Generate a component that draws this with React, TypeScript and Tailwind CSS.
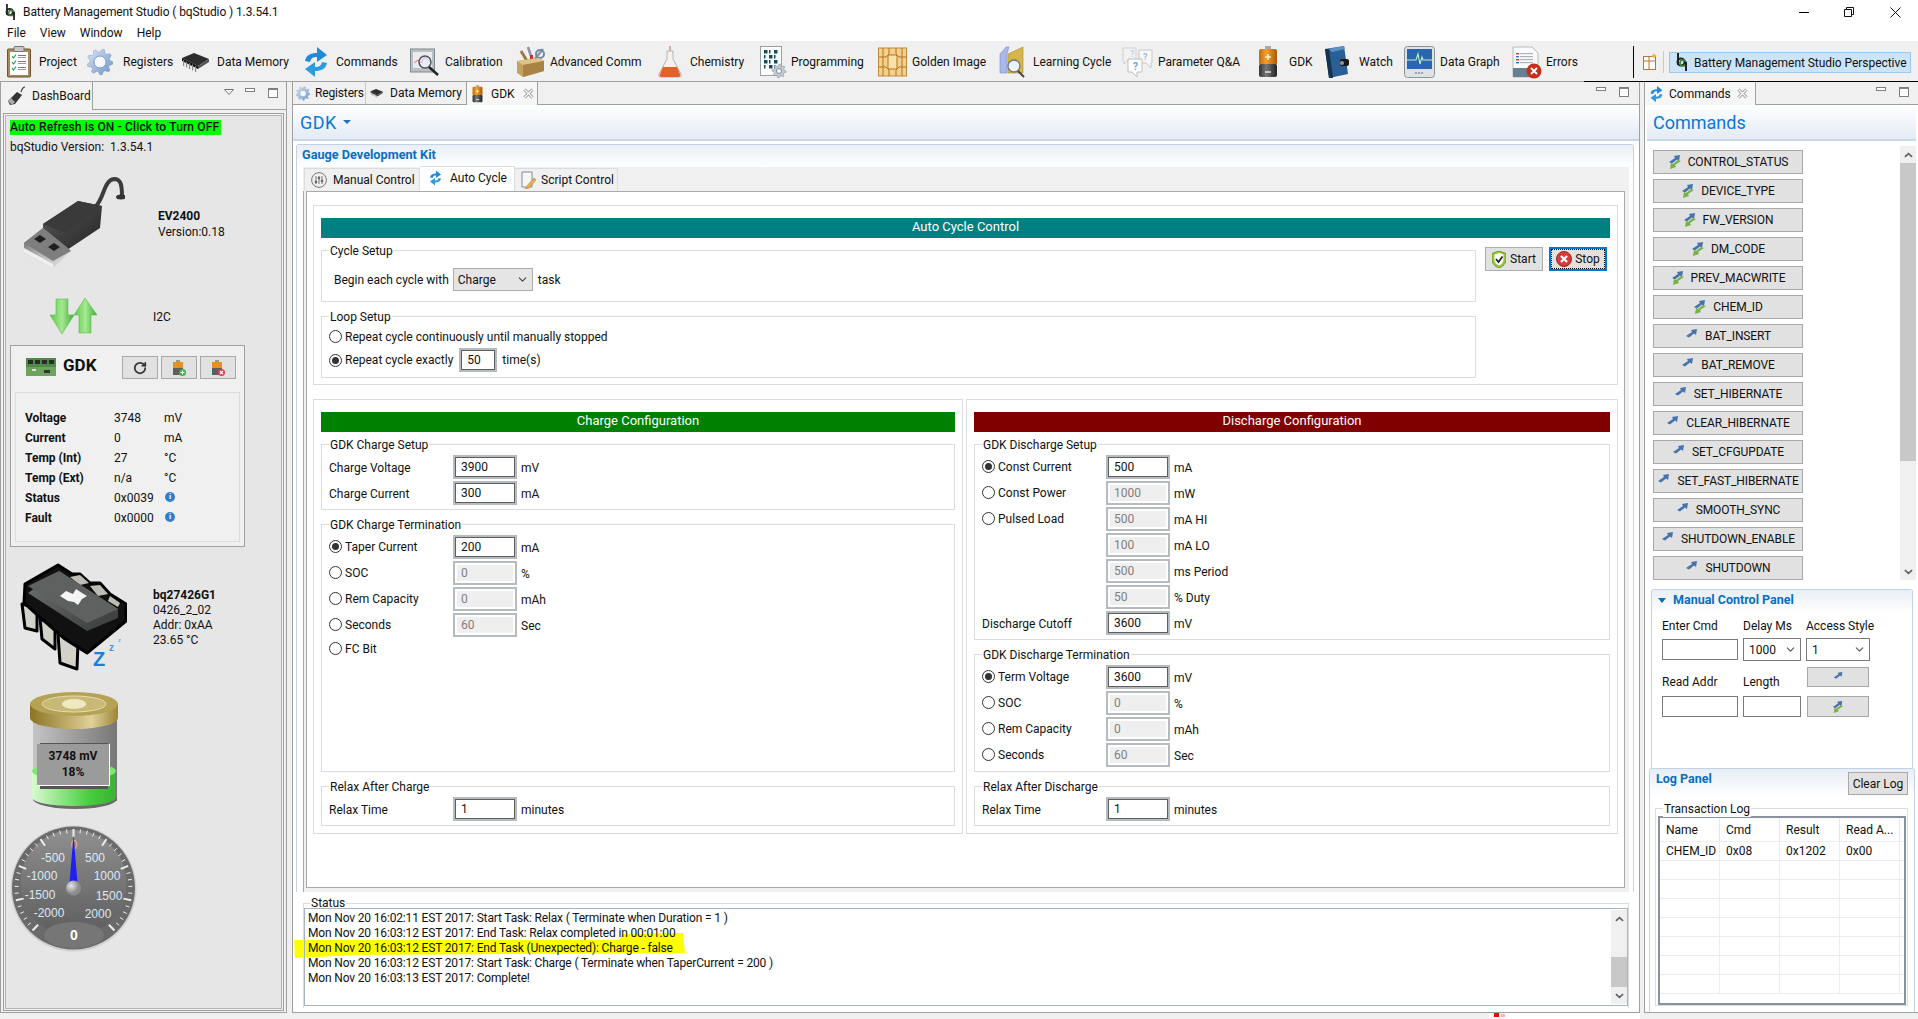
import React from 'react';
import { RotateCw, ChevronDown } from 'lucide-react';

type IconProps = { className?: string };

function gearPoints(cx: number, cy: number, ro: number, ri: number, n: number) {
  const pts: string[] = [];
  for (let i = 0; i < n * 4; i++) {
    const a = (i / (n * 4)) * Math.PI * 2;
    const r = i % 4 < 2 ? ro : ri;
    pts.push(`${(cx + r * Math.cos(a)).toFixed(2)},${(cy + r * Math.sin(a)).toFixed(2)}`);
  }
  return pts.join(' ');
}

function ProjectIcon({ className }: IconProps) {
  return (
    <svg viewBox="0 0 24 32" className={className}>
      <rect x="0.5" y="3" width="23" height="28" rx="1" fill="#a98a5f" stroke="#6f5432" />
      <rect x="3" y="6" width="18" height="23" fill="#fff" />
      <rect x="7" y="0.5" width="10" height="5" rx="1" fill="#c9c9c9" stroke="#777" />
      {[10, 16, 22].map((y) => (
        <g key={y}>
          <path d={`M5 ${y}l1.5 2 2.5-3.5`} stroke="#2f9a5a" strokeWidth="1.2" fill="none" />
          <rect x="11" y={y - 1} width="8" height="1" fill="#777" />
          <rect x="11" y={y + 1} width="8" height="1" fill="#999" />
        </g>
      ))}
    </svg>
  );
}

function GearIcon({ className }: IconProps) {
  return (
    <svg viewBox="0 0 26 30" className={className}>
      <defs>
        <linearGradient id="gearFill" x1="0" y1="0" x2="1" y2="1">
          <stop offset="0" stopColor="#dbe6f5" />
          <stop offset="1" stopColor="#6d92c6" />
        </linearGradient>
      </defs>
      <polygon points={gearPoints(13, 15, 13, 10, 9)} fill="url(#gearFill)" stroke="#7f9cc6" strokeWidth="0.5" />
      <circle cx="13" cy="15" r="6" fill="#f5f7fb" stroke="#7f9cc6" />
    </svg>
  );
}

function ChipIcon({ className }: IconProps) {
  return (
    <svg viewBox="0 0 30 22" className={className}>
      <polygon points="2,7 14,2 29,8 18,15" fill="#2d2d2d" />
      <polygon points="2,7 18,15 18,18 2,10" fill="#111" />
      <polygon points="18,15 29,8 29,11 18,18" fill="#555" />
      {[3, 6, 9, 12, 15].map((x) => (
        <rect key={x} x={x} y={9 + (x - 3) / 2} width="1.2" height="6" fill="#8a8a8a" />
      ))}
    </svg>
  );
}

function SyncIcon({ className }: IconProps) {
  return (
    <svg viewBox="0 0 24 32" className={className}>
      <path d="M1 15C2 9 7 7 13 7V1l10 8-10 7v-5c-4 0-6 1-7 5z" fill="#1f8ad8" />
      <path d="M23 17c-1 6-6 8-12 8v6L1 23l10-7v5c4 0 6-1 7-5z" fill="#2c9be4" />
    </svg>
  );
}

function CalibrationIcon({ className }: IconProps) {
  return (
    <svg viewBox="0 0 30 30" className={className}>
      <rect x="0.5" y="2" width="24" height="23" fill="#b9c0c6" stroke="#80888e" />
      <rect x="3" y="5" width="19" height="16" fill="#e9edf0" />
      <path d="M4 16l4-3 3 3 4-6 5 5" stroke="#d46" fill="none" strokeWidth="0.8" />
      <circle cx="15" cy="15" r="6" fill="#dff0fa" fillOpacity="0.6" stroke="#555" strokeWidth="1.5" />
      <path d="M19 20l9 8" stroke="#222" strokeWidth="2.5" />
    </svg>
  );
}

function ToolboxIcon({ className }: IconProps) {
  return (
    <svg viewBox="0 0 30 32" className={className}>
      <path d="M13 1l4 12M28 3l-9 11" stroke="#8c96a8" strokeWidth="2.5" />
      <path d="M6 5l6 10" stroke="#9b7a3f" strokeWidth="3" />
      <circle cx="25" cy="8" r="4" fill="none" stroke="#7186aa" strokeWidth="2" />
      <rect x="15" y="9" width="3" height="6" fill="#cc2f2f" />
      <polygon points="2,15 24,12 29,15 29,25 8,31 2,27" fill="#c4a15f" />
      <polygon points="2,15 24,12 29,15 8,19" fill="#dcc388" />
      <polygon points="8,19 29,15 29,25 8,31" fill="#a98343" />
    </svg>
  );
}

function FlaskIcon({ className }: IconProps) {
  return (
    <svg viewBox="0 0 28 32" className={className}>
      <path d="M14 0v8" stroke="#c89a8a" strokeWidth="1.5" />
      <path d="M11 5h6v8l8 15c1 2 0 3-2 3H5c-2 0-3-1-2-3l8-15z" fill="#f4f1ee" stroke="#b8b3ad" />
      <path d="M7 21h14l3 7c1 2 0 3-2 3H6c-2 0-3-1-2-3z" fill="#e2622a" />
    </svg>
  );
}

function ProgrammingIcon({ className }: IconProps) {
  const cells = [0, 1, 2, 3, 4, 5, 6, 7, 8, 9, 10, 11];
  return (
    <svg viewBox="0 0 27 32" className={className}>
      <rect x="0.5" y="0.5" width="21" height="29" fill="#fff" stroke="#9aa0a6" />
      {cells.map((i) => (
        <rect key={i} x={4 + (i % 3) * 5} y={4 + Math.floor(i / 3) * 5} width={i % 2 ? 1.5 : 3.5} height="3.5" fill="#124f5c" />
      ))}
      <polygon points={gearPoints(19, 25, 7, 5, 8)} fill="#c3ccd6" stroke="#7d8894" strokeWidth="0.5" />
      <circle cx="19" cy="25" r="2.5" fill="#fff" stroke="#7d8894" />
    </svg>
  );
}

function GoldenIcon({ className }: IconProps) {
  return (
    <svg viewBox="0 0 29 30" className={className}>
      <rect x="0.5" y="1" width="28" height="28" fill="#f3d08c" stroke="#c08a3a" />
      <path d="M1 10h7l3-3V1M18 1v6l3 3h7M1 20h7l3 3v6M18 29v-6l3-3h7M5 1v28M24 1v28" stroke="#b5701f" fill="none" />
      <rect x="10" y="8" width="9" height="14" rx="1.5" fill="#f6e2ab" stroke="#b5701f" />
    </svg>
  );
}

function LearningIcon({ className }: IconProps) {
  return (
    <svg viewBox="0 0 27 32" className={className}>
      <polygon points="1,8 7,1 10,1 8,8 8,27 1,27" fill="#a9b7ea" stroke="#7c8bc9" strokeWidth="0.6" />
      <polygon points="9,8 24,1 24,27 9,27" fill="#d4b64a" stroke="#a88d2a" strokeWidth="0.6" />
      <circle cx="15" cy="20" r="6" fill="#eaf4f7" stroke="#6b7a80" strokeWidth="1.3" />
      <path d="M19 25l6 6" stroke="#444" strokeWidth="2" />
    </svg>
  );
}

function QaIcon({ className }: IconProps) {
  return (
    <svg viewBox="0 0 31 32" className={className}>
      <path d="M1 2h13v13H5l-3 3V15H1z" fill="#f2f2f2" stroke="#d0d0d0" />
      <path d="M17 4h13v13h-1v5l-5-5h-7z" fill="#f7f7f7" stroke="#c8c8c8" />
      <path d="M6 13h14v13h-5v5l-5-5H6z" fill="#fff" stroke="#bdbdbd" />
      <text x="8" y="11" fontSize="9" fill="#c6d6ea" fontWeight="700">?</text>
      <text x="21" y="14" fontSize="9" fill="#9fbbdd" fontWeight="700">?</text>
      <text x="11" y="24" fontSize="10" fill="#6f9bd0" fontWeight="700">?</text>
    </svg>
  );
}

function BatteryIcon({ className }: IconProps) {
  return (
    <svg viewBox="0 0 20 32" className={className}>
      <defs>
        <linearGradient id="batSide" x1="0" x2="1">
          <stop offset="0" stopColor="#c06a10" />
          <stop offset="0.4" stopColor="#f5a02a" />
          <stop offset="1" stopColor="#a85a08" />
        </linearGradient>
        <linearGradient id="batDark" x1="0" x2="1">
          <stop offset="0" stopColor="#333" />
          <stop offset="0.4" stopColor="#777" />
          <stop offset="1" stopColor="#222" />
        </linearGradient>
      </defs>
      <rect x="7" y="0" width="6" height="4" fill="#aaa" />
      <rect x="1" y="3" width="18" height="16" rx="2" fill="url(#batSide)" />
      <rect x="1" y="18" width="18" height="13" rx="2" fill="url(#batDark)" />
      <path d="M10 8v6M7 11h6" stroke="#fff2c8" strokeWidth="1.6" />
      <path d="M7 26h6" stroke="#ddd" strokeWidth="1.6" />
    </svg>
  );
}

function WatchIcon({ className }: IconProps) {
  return (
    <svg viewBox="0 0 26 32" className={className}>
      <polygon points="1,3 20,0 24,28 5,32" fill="#275f96" />
      <polygon points="1,3 5,3 9,32 5,32" fill="#16324f" />
      <polygon points="5,3 20,0 21,3 8,6" fill="#5d93c4" />
      <rect x="16" y="13" width="9" height="7" rx="2" fill="#1a1a1a" />
      <circle cx="18" cy="17" r="2" fill="#999" />
    </svg>
  );
}

function GraphIcon({ className }: IconProps) {
  return (
    <svg viewBox="0 0 31 32" className={className}>
      <rect x="0.5" y="0.5" width="30" height="31" rx="3" fill="#dfe2e4" stroke="#8c9296" />
      <rect x="3" y="3" width="25" height="20" fill="#2a66b0" />
      <path d="M3 14h9l2-6 2 10 2-7 1 3h9" stroke="#c6f1c0" fill="none" strokeWidth="1.1" />
      {[12, 15, 18].map((x) => (
        <circle key={x} cx={x} cy="27" r="1.1" fill="#8d9398" />
      ))}
    </svg>
  );
}

function ErrorsIcon({ className }: IconProps) {
  return (
    <svg viewBox="0 0 30 33" className={className}>
      <path d="M1 1h19l6 6v24H1z" fill="#fafafa" stroke="#b7bcc1" />
      <rect x="1" y="22" width="25" height="9" fill="#6a7f94" />
      {[7, 10, 13, 16].map((y) => (
        <g key={y}>
          <rect x="4" y={y} width="3" height="1.4" fill={y % 2 ? '#c33' : '#37c'} />
          <rect x="8" y={y} width="13" height="1.2" fill="#aab2bb" />
        </g>
      ))}
      <circle cx="22" cy="25" r="7.5" fill="#c4301c" />
      <path d="M19 22l6 6M25 22l-6 6" stroke="#fff" strokeWidth="1.8" />
    </svg>
  );
}

function BqLogo({ className }: IconProps) {
  return (
    <svg viewBox="0 0 12 18" className={className}>
      <rect x="1" y="0" width="2" height="12" fill="#222" />
      <circle cx="5" cy="9" r="3.5" fill="none" stroke="#222" strokeWidth="2" />
      <circle cx="7" cy="10" r="3" fill="none" stroke="#3f7f3f" strokeWidth="1.6" />
      <rect x="9" y="9" width="2" height="9" fill="#222" />
    </svg>
  );
}

function CloseX() {
  return (
    <svg viewBox="0 0 11 11" className="w-[11px] h-[11px] shrink-0">
      <path d="M1.5 1.5l8 8M9.5 1.5l-8 8" stroke="#8b8b8b" strokeWidth="3" />
      <path d="M1.5 1.5l8 8M9.5 1.5l-8 8" stroke="#fff" strokeWidth="1.4" />
    </svg>
  );
}

function PaneControls({ spread = 'gap-[13px]' }: { spread?: string }) {
  return (
    <div className={`flex items-start ${spread}`}>
      <div className="w-[10px] h-[4px] border border-[#7f7f7f] bg-white mt-[5px]" />
      <div className="w-[10px] h-[10px] border border-[#7f7f7f] border-t-2 bg-white mt-[5px]" />
    </div>
  );
}

const toolbarItems = [
  { label: 'Project', Icon: ProjectIcon, icon: 'w-[24px] h-[32px]', gap: 'ml-[8px]', width: 'w-[80px]' },
  { label: 'Registers', Icon: GearIcon, icon: 'w-[26px] h-[30px]', gap: 'ml-[10px]', width: 'w-[93px]' },
  { label: 'Data Memory', Icon: ChipIcon, icon: 'w-[30px] h-[22px]', gap: 'ml-[7px]', width: 'w-[124px]' },
  { label: 'Commands', Icon: SyncIcon, icon: 'w-[24px] h-[32px]', gap: 'ml-[8px]', width: 'w-[106px]' },
  { label: 'Calibration', Icon: CalibrationIcon, icon: 'w-[30px] h-[30px]', gap: 'ml-[5px]', width: 'w-[105px]' },
  { label: 'Advanced Comm', Icon: ToolboxIcon, icon: 'w-[30px] h-[32px]', gap: 'ml-[5px]', width: 'w-[141px]' },
  { label: 'Chemistry', Icon: FlaskIcon, icon: 'w-[28px] h-[32px]', gap: 'ml-[6px]', width: 'w-[104px]' },
  { label: 'Programming', Icon: ProgrammingIcon, icon: 'w-[27px] h-[32px]', gap: 'ml-[4px]', width: 'w-[118px]' },
  { label: 'Golden Image', Icon: GoldenIcon, icon: 'w-[29px] h-[30px]', gap: 'ml-[5px]', width: 'w-[121px]' },
  { label: 'Learning Cycle', Icon: LearningIcon, icon: 'w-[27px] h-[32px]', gap: 'ml-[7px]', width: 'w-[123px]' },
  { label: 'Parameter Q&A', Icon: QaIcon, icon: 'w-[31px] h-[32px]', gap: 'ml-[5px]', width: 'w-[136px]' },
  { label: 'GDK', Icon: BatteryIcon, icon: 'w-[20px] h-[32px]', gap: 'ml-[11px]', width: 'w-[66px]' },
  { label: 'Watch', Icon: WatchIcon, icon: 'w-[26px] h-[32px]', gap: 'ml-[9px]', width: 'w-[80px]' },
  { label: 'Data Graph', Icon: GraphIcon, icon: 'w-[31px] h-[32px]', gap: 'ml-[5px]', width: 'w-[108px]' },
  { label: 'Errors', Icon: ErrorsIcon, icon: 'w-[30px] h-[33px]', gap: 'ml-[4px]', width: 'w-[70px]' },
];

function Toolbar() {
  return (
    <div className="h-[40px] flex items-center pl-[7px] pt-[2px] shrink-0">
      {toolbarItems.map(({ label, Icon, icon, gap, width }) => (
        <div key={label} className={`flex items-center shrink-0 ${width}`}>
          <Icon className={`${icon} shrink-0`} />
          <span className={`${gap} whitespace-nowrap`}>{label}</span>
        </div>
      ))}
      <div className="w-px h-[32px] bg-black ml-[51px]" />
      <svg viewBox="0 0 14 18" className="w-[14px] h-[18px] ml-[9px]">
        <rect x="0.5" y="3.5" width="12" height="13" fill="#fff" stroke="#b07a3a" />
        <path d="M0.5 8h12M6 3.5v13" stroke="#b07a3a" />
        <path d="M11 0l1 2 2 1-2 1-1 2-1-2-2-1 2-1z" fill="#e5b83a" />
      </svg>
      <div className="w-px h-[22px] bg-[#c8c8c8] ml-[6px]" />
      <div className="ml-[5px] w-[242px] h-[21px] bg-[#cce4f7] border border-[#99c9ef] flex items-center pl-[6px] gap-[6px]">
        <BqLogo className="w-[12px] h-[18px]" />
        <span className="whitespace-nowrap mt-[2px] tracking-[-0.05px]">Battery Management Studio Perspective</span>
      </div>
    </div>
  );
}

function UsbIcon() {
  return (
    <svg viewBox="0 0 101 93" className="w-[101px] h-[93px]">
      <defs>
        <linearGradient id="usbMetal" x1="0" y1="0" x2="1" y2="1">
          <stop offset="0" stopColor="#5f5f5f" />
          <stop offset="0.5" stopColor="#b4b4b4" />
          <stop offset="1" stopColor="#e8e8e8" />
        </linearGradient>
        <linearGradient id="usbBody" x1="0" y1="0" x2="1" y2="1">
          <stop offset="0" stopColor="#5a5a5a" />
          <stop offset="1" stopColor="#222" />
        </linearGradient>
      </defs>
      <path d="M72 30C80 22 80 4 90 3c7 0 8 6 8 18" stroke="#3c3c3c" strokeWidth="4" fill="none" />
      <ellipse cx="97" cy="21" rx="5" ry="2.500" fill="#333" />
      <polygon points="19,48 54,25 78,30 76,52 37,78 19,55" fill="url(#usbBody)" />
      <polygon points="19,48 54,25 78,30 42,57" fill="#3a3a3a" />
      <polygon points="0,67 19,52 47,75 29,92 0,77" fill="url(#usbMetal)" />
      <polygon points="0,67 19,52 47,75 29,85" fill="#7e7e7e" />
      <polygon points="0,72 29,88 29,92 0,77" fill="#efefef" />
      <polygon points="10,63 16,59 22,63 16,67" fill="#1f1f1f" />
      <polygon points="24,71 30,67 36,71 30,75" fill="#1f1f1f" />
    </svg>
  );
}

function ArrowsIcon() {
  return (
    <svg viewBox="0 0 47 37" className="w-[47px] h-[37px]">
      <defs>
        <linearGradient id="arrowGreen" x1="0" x2="1">
          <stop offset="0" stopColor="#5cc94a" />
          <stop offset="0.5" stopColor="#a5e890" />
          <stop offset="1" stopColor="#3fae3a" />
        </linearGradient>
      </defs>
      <polygon points="6,1 18,1 18,17 24,17 12,36 0,17 6,17" fill="url(#arrowGreen)" stroke="#4eb045" strokeWidth="0.5" />
      <polygon points="29,35 41,35 41,17 47,17 35,0 24,17 29,17" fill="url(#arrowGreen)" stroke="#4eb045" strokeWidth="0.5" />
    </svg>
  );
}

function PcbIcon() {
  return (
    <svg viewBox="0 0 30 18" className="w-[30px] h-[18px] shrink-0">
      <rect width="30" height="18" fill="#4f8a4a" />
      <rect y="9" width="30" height="9" fill="#6ea35c" />
      {[2, 9, 16, 23].map((x) => (
        <rect key={x} x={x} y="2" width="5" height="4" fill="#2a2a2a" />
      ))}
      <rect x="6" y="11" width="4" height="2" fill="#ddd" />
      <rect x="18" y="12" width="6" height="3" fill="#333" />
    </svg>
  );
}

function SmallBattery({ add }: { add: boolean }) {
  return (
    <svg viewBox="0 0 14 16" className="w-[14px] h-[16px]">
      <rect x="4" y="0" width="4" height="2" fill="#999" />
      <rect x="1" y="2" width="10" height="6" fill="#e8921e" />
      <rect x="1" y="8" width="10" height="7" fill="#5e5e5e" />
      <circle cx="10.5" cy="12.5" r="3.5" fill={add ? '#3ab53a' : '#d8404a'} />
      {add ? (
        <path d="M8.5 12.5h4M10.5 10.5v4" stroke="#fff" strokeWidth="1.2" />
      ) : (
        <path d="M9 11l3 3M12 11l-3 3" stroke="#fff" strokeWidth="1.2" />
      )}
    </svg>
  );
}

function InfoDot() {
  return (
    <span className="w-[10px] h-[10px] mt-[-2px] ml-[1px] rounded-full bg-[#2f7fcf] text-white text-[8px] leading-[10px] text-center font-bold">i</span>
  );
}

function IcChip() {
  return (
    <svg viewBox="0 0 107 108" className="w-[107px] h-[108px]">
      <defs>
        <linearGradient id="icTop" x1="0" y1="0" x2="1" y2="0.6">
          <stop offset="0" stopColor="#6e7070" />
          <stop offset="1" stopColor="#404242" />
        </linearGradient>
      </defs>
      <g stroke="#000" strokeWidth="3" strokeLinejoin="round">
        <polygon points="2,41 17,45 17,68 5,65" fill="#d2d2ca" />
        <polygon points="20,55 35,65 35,86 22,76" fill="#d2d2ca" />
        <polygon points="38,71 58,80 57,106 40,100" fill="#d2d2ca" />
        <polygon points="5,21 38,2 52,11 60,11 70,20 80,20 90,31 106,41 106,58 67,90 45,76 22,56 4,40" fill="#111" />
      </g>
      <polygon points="50,14 60,12 69,20 60,22" fill="#bdbdb5" />
      <polygon points="70,23 80,22 88,31 78,33" fill="#bdbdb5" />
      <polygon points="90,33 100,40 98,44 88,38" fill="#bdbdb5" />
      <polygon points="8,30 39,8 98,46 98,55 67,68" fill="url(#icTop)" />
      <polygon points="8,23 39,8 98,46 67,60" fill="#5f6161" />
      <polygon points="40,33 46,28 53,31 56,26 62,30 67,33 62,36 58,42 54,39 48,38" fill="#f4f4f4" />
      <text x="73" y="103" fontSize="20" fontWeight="700" fill="#1a7fd6" fontFamily="Liberation Sans, sans-serif">Z</text>
      <text x="89" y="88" fontSize="10" fontWeight="700" fill="#3c97e0" fontFamily="Liberation Sans, sans-serif">z</text>
      <text x="98" y="79" fontSize="6" fontWeight="700" fill="#6cb0e8" fontFamily="Liberation Sans, sans-serif">z</text>
    </svg>
  );
}

function BatteryGauge() {
  return (
    <div className="relative w-[89px] h-[120px]">
      <svg viewBox="0 0 89 120" className="w-[89px] h-[120px]">
        <defs>
          <linearGradient id="cellBody" x1="0" x2="1">
            <stop offset="0" stopColor="#c4c4c4" />
            <stop offset="1" stopColor="#777" />
          </linearGradient>
          <linearGradient id="cellGreen" x1="0" x2="1">
            <stop offset="0" stopColor="#d8fbd0" />
            <stop offset="0.7" stopColor="#45cc3c" />
            <stop offset="1" stopColor="#3db035" />
          </linearGradient>
          <linearGradient id="cellCap" x1="0" x2="1">
            <stop offset="0" stopColor="#8c7423" />
            <stop offset="0.7" stopColor="#e0d19a" />
            <stop offset="1" stopColor="#9c8436" />
          </linearGradient>
        </defs>
        <rect x="3" y="20" width="84" height="90" fill="url(#cellBody)" />
        <ellipse cx="45" cy="108" rx="42" ry="10" fill="#6a6a6a" />
        <path d="M2 80c0 10 84 10 84 0v26c0 12-84 12-84 0z" fill="url(#cellGreen)" />
        <ellipse cx="44" cy="80" rx="42" ry="9" fill="#7ce872" />
        <rect x="0" y="13" width="88" height="14" fill="url(#cellCap)" />
        <ellipse cx="44" cy="27" rx="44" ry="11" fill="url(#cellCap)" />
        <ellipse cx="44" cy="13" rx="44" ry="12" fill="#b5a255" />
        <ellipse cx="44" cy="13" rx="32" ry="8" fill="#c9b976" stroke="#e6dcae" />
        <ellipse cx="44" cy="13" rx="12" ry="5" fill="#f0e8c0" />
        <rect x="10" y="52" width="68" height="46" fill="#555" />
      </svg>
      <div className="absolute left-[7px] top-[53px] w-[73px] h-[42px] bg-[#9b9b9b] border-r border-b border-white text-center font-bold text-[12px] leading-[16px] pt-[4px]">
        <div>3748 mV</div>
        <div>18%</div>
      </div>
    </div>
  );
}

function DialGauge() {
  const ticks = Array.from({ length: 41 }, (_, i) => -136 + i * 6.8);
  const labels: [string, number, number][] = [
    ['-500', 43, 33],
    ['500', 85, 33],
    ['-1000', 32, 51],
    ['1000', 97, 51],
    ['-1500', 30, 70],
    ['1500', 99, 71],
    ['-2000', 39, 88],
    ['2000', 88, 89],
  ];
  return (
    <svg viewBox="0 0 127 127" className="w-[127px] h-[127px]">
      <defs>
        <linearGradient id="dialFace" x1="0" y1="0" x2="0" y2="1">
          <stop offset="0" stopColor="#8f8f8f" />
          <stop offset="1" stopColor="#5d5d5d" />
        </linearGradient>
        <radialGradient id="dialHub" cx="0.35" cy="0.35">
          <stop offset="0" stopColor="#e6e6e6" />
          <stop offset="1" stopColor="#8c8c8c" />
        </radialGradient>
      </defs>
      <circle cx="63.5" cy="63.5" r="63" fill="#d0d0d0" />
      <circle cx="63.5" cy="63" r="61.5" fill="#6a6a6a" />
      <circle cx="63.5" cy="58" r="53" fill="url(#dialFace)" />
      <ellipse cx="64" cy="110" rx="30" ry="13" fill="#767676" />
      {ticks.map((a, i) => {
        const major = i % 5 === 0;
        const r = (a * Math.PI) / 180;
        const s = Math.sin(r);
        const c = Math.cos(r);
        const r1 = major ? 51 : 55;
        return (
          <line
            key={i}
            x1={63.5 + r1 * s}
            y1={63 - r1 * c}
            x2={63.5 + 59 * s}
            y2={63 - 59 * c}
            stroke="#eee"
            strokeWidth={major ? 2 : 1}
          />
        );
      })}
      <g fill="#dbe8f7" fontSize="12" fontFamily="Liberation Sans, sans-serif" textAnchor="middle">
        {labels.map(([t, x, y]) => (
          <text key={t} x={x} y={y + 4}>{t}</text>
        ))}
        <text x="64" y="24" fill="#e8b89c">0</text>
        <text x="64" y="115" fontSize="14" fontWeight="700" fill="#fff">0</text>
      </g>
      <polygon points="63.5,10 67.5,58 59.5,58" fill="#1f1ff0" />
      <circle cx="63.5" cy="63" r="7.5" fill="url(#dialHub)" />
    </svg>
  );
}

const gdkRows: [string, string, string | null][] = [
  ['Voltage', '3748', 'mV'],
  ['Current', '0', 'mA'],
  ['Temp (Int)', '27', '°C'],
  ['Temp (Ext)', 'n/a', '°C'],
  ['Status', '0x0039', null],
  ['Fault', '0x0000', null],
];

function DashBoard() {
  return (
    <div className="w-[287px] shrink-0 border-l border-r border-b border-[#a0a0a0] flex flex-col">
      <div className="h-[28px] flex border-b border-[#a0a0a0] shrink-0">
        <div className="w-[92px] h-[28px] border-r border-[#a0a0a0] bg-[#f2f2f2] flex items-center pl-[6px] gap-[6px]">
          <svg viewBox="0 0 19 20" className="w-[19px] h-[20px]">
            <path d="M14 6c1-3 2-5 4-5" stroke="#333" fill="none" strokeWidth="1.2" />
            <polygon points="1,15 10,6 15,9 8,18 3,19" fill="#333" />
            <polygon points="1,15 4,12 8,16 5,19" fill="#aaa" />
          </svg>
          <span>DashBoard</span>
        </div>
        <div className="flex-1 flex items-start justify-end pr-[8px] pt-[1px] gap-[11px]">
          <svg viewBox="0 0 10 6" className="w-[10px] h-[6px] mt-[6px]">
            <path d="M0.5 0.5h9L5 5.5z" fill="#fff" stroke="#777" />
          </svg>
          <PaneControls />
        </div>
      </div>
      <div className="flex-1 mx-[2px] mt-[3px] mb-[1px] border border-[#a0a0a0] p-px">
        <div className="h-full border border-[#b5b5b5] bg-[#e6e6e6]">
          <div className="ml-[4px] mt-[4px] w-[211px] h-[15px] bg-[#00ff00] leading-[15px] whitespace-nowrap font-medium tracking-[0.15px]">Auto Refresh is ON - Click to Turn OFF</div>
          <div className="ml-[4px] mt-[4px] h-[16px] leading-[16px] whitespace-pre">bqStudio Version:  1.3.54.1</div>
          <div className="ml-[18px] mt-[21px] flex">
            <UsbIcon />
            <div className="ml-[33px] mt-[32px] leading-[16px]">
              <div className="font-bold">EV2400</div>
              <div>Version:0.18</div>
            </div>
          </div>
          <div className="ml-[44px] mt-[29px] flex items-center">
            <ArrowsIcon />
            <span className="ml-[56px]">I2C</span>
          </div>
          <div className="ml-[4px] mt-[10px] w-[235px] h-[202px] border border-[#a0a0a0] bg-[#f0f0f0]">
            <div className="flex items-start pt-[10px] pl-[15px] pr-[8px]">
              <div className="mt-[2px]"><PcbIcon /></div>
              <span className="ml-[7px] mt-[1px] font-bold text-[17px] leading-[16px]">GDK</span>
              <div className="ml-auto flex gap-[3px]">
                <button className="w-[36px] h-[23px] bg-[#e1e1e1] border border-[#a8a8a8] flex items-center justify-center">
                  <RotateCw size={14} strokeWidth={3} className="text-[#333]" />
                </button>
                <button className="w-[36px] h-[23px] bg-[#e1e1e1] border border-[#a8a8a8] flex items-center justify-center">
                  <SmallBattery add />
                </button>
                <button className="w-[36px] h-[23px] bg-[#e1e1e1] border border-[#a8a8a8] flex items-center justify-center">
                  <SmallBattery add={false} />
                </button>
              </div>
            </div>
            <div className="mx-[4px] mt-[13px] h-[150px] border border-[#dcdcdc] pt-[15px]">
              {gdkRows.map(([label, value, unit]) => (
                <div key={label} className="h-[20px] flex items-center pl-[9px]">
                  <span className="w-[89px] font-bold">{label}</span>
                  <span className="w-[50px]">{value}</span>
                  {unit ? <span>{unit}</span> : <InfoDot />}
                </div>
              ))}
            </div>
          </div>
          <div className="ml-[14px] mt-[16px] flex">
            <IcChip />
            <div className="ml-[26px] mt-[25px] leading-[15px]">
              <div className="font-bold">bq27426G1</div>
              <div>0426_2_02</div>
              <div>Addr: 0xAA</div>
              <div>23.65 °C</div>
            </div>
          </div>
          <div className="ml-[24px] mt-[20px]">
            <BatteryGauge />
          </div>
          <div className="ml-[4px] mt-[14px]">
            <DialGauge />
          </div>
        </div>
      </div>
    </div>
  );
}

function Group({ title, className, children }: { title: string; className?: string; children?: React.ReactNode }) {
  return (
    <div className={`relative border border-[#dcdcdc] ${className ?? ''}`}>
      <span className="absolute -top-[8px] left-[7px] bg-white px-[1px] leading-[16px] whitespace-nowrap">{title}</span>
      {children}
    </div>
  );
}

function Field({ value, enabled = true, className = 'w-[64px]' }: { value: string; enabled?: boolean; className?: string }) {
  return (
    <div className={`h-[24px] shrink-0 border-2 border-[#b6bbc0] ${className}`}>
      {enabled ? (
        <div className="h-full border border-[#5e5e5e] bg-white pl-[5px] leading-[19px]">{value}</div>
      ) : (
        <div className="h-full border-2 border-white bg-[#efefef] pl-[4px] leading-[17px] text-[#808080]">{value}</div>
      )}
    </div>
  );
}

function Radio({ label, on = false }: { label: string; on?: boolean }) {
  return (
    <div className="flex items-center w-[124px] -mt-[2px]">
      <span className="w-[13px] h-[13px] rounded-full border border-[#333] bg-white flex items-center justify-center shrink-0">
        {on && <span className="w-[7px] h-[7px] rounded-full bg-[#333]" />}
      </span>
      <span className="ml-[3px] mt-[1px]">{label}</span>
    </div>
  );
}

type RowSpec = { label?: string; radio?: boolean; on?: boolean; value: string; unit: string; enabled?: boolean };

function FieldRows({ rows }: { rows: RowSpec[] }) {
  return (
    <div className="flex flex-col gap-[2px]">
      {rows.map((r, i) => (
        <div key={i} className="h-[24px] flex items-center">
          {r.radio ? <Radio label={r.label ?? ''} on={r.on} /> : <span className="w-[124px] mt-[2px]">{r.label}</span>}
          <Field value={r.value} enabled={r.enabled ?? true} />
          <span className="ml-[4px] mt-[2px]">{r.unit}</span>
        </div>
      ))}
    </div>
  );
}

function CycleSetup() {
  return (
    <div className="mx-[6px] mt-[13px] h-[180px] w-[1305px] border border-[#dcdcdc] px-[7px] pt-[12px]">
      <div className="h-[20px] bg-[#008080] text-white text-center text-[13px] leading-[18px]">Auto Cycle Control</div>
      <div className="flex mt-[12px] items-start">
        <div className="w-[1155px]">
          <Group title="Cycle Setup" className="h-[52px]">
            <div className="flex items-center pl-[12px] pt-[17px]">
              <span>Begin each cycle with</span>
              <div className="ml-[4px] w-[80px] h-[23px] bg-[#e5e5e5] border border-[#adadad] flex items-center justify-between pl-[4px] pr-[3px]">
                <span>Charge</span>
                <ChevronDown size={13} className="text-[#444]" />
              </div>
              <span className="ml-[5px]">task</span>
            </div>
          </Group>
          <Group title="Loop Setup" className="h-[62px] mt-[14px]">
            <div className="pl-[7px] pt-[9px]">
              <div className="h-[20px] flex items-center">
                <div className="flex items-center">
                  <span className="w-[13px] h-[13px] rounded-full border border-[#333] bg-white" />
                  <span className="ml-[3px] mt-[2px]">Repeat cycle continuously until manually stopped</span>
                </div>
              </div>
              <div className="h-[24px] flex items-center mt-[2px]">
                <span className="w-[13px] h-[13px] rounded-full border border-[#333] bg-white flex items-center justify-center">
                  <span className="w-[7px] h-[7px] rounded-full bg-[#333]" />
                </span>
                <span className="ml-[3px]">Repeat cycle exactly</span>
                <Field value="50" className="w-[38px] ml-[6px]" />
                <span className="ml-[5px]">time(s)</span>
              </div>
            </div>
          </Group>
        </div>
        <div className="ml-[9px] flex gap-[6px] -mt-[3px]">
          <button className="w-[58px] h-[24px] bg-[#e1e1e1] border border-[#adadad] flex items-center justify-center gap-[4px]">
            <svg viewBox="0 0 14 17" className="w-[14px] h-[17px]">
              <path d="M7 0l7 2.5v6c0 4-3 7-7 8.5-4-1.5-7-4.5-7-8.5v-6z" fill="#9bc53d" stroke="#6a9a20" />
              <path d="M2.5 3.5L7 2l4.5 1.5v5c0 3-2 5-4.5 6-2.5-1-4.5-3-4.5-6z" fill="#fff" />
              <path d="M4 8l2.5 3L10.500 5.500" stroke="#222" strokeWidth="1.7" fill="none" />
            </svg>
            <span>Start</span>
          </button>
          <button className="w-[58px] h-[24px] bg-[#e1e1e1] border-2 border-[#0078d7] flex items-center justify-center gap-[3px] outline-1 outline-dotted outline-black -outline-offset-3">
            <svg viewBox="0 0 16 16" className="w-[16px] h-[16px]">
              <circle cx="8" cy="8" r="7.500" fill="#d63b3b" stroke="#a82020" />
              <path d="M5 5l6 6M11 5l-6 6" stroke="#fff" strokeWidth="2.2" />
            </svg>
            <span>Stop</span>
          </button>
        </div>
      </div>
    </div>
  );
}

function ChargeConfig() {
  return (
    <div className="w-[650px] h-[435px] border border-[#dcdcdc] px-[7px] pt-[12px]">
      <div className="h-[20px] bg-[#008000] text-white text-center text-[13px] leading-[18px]">Charge Configuration</div>
      <Group title="GDK Charge Setup" className="h-[66px] mt-[12px] pl-[7px] pt-[10px]">
        <FieldRows
          rows={[
            { label: 'Charge Voltage', value: '3900', unit: 'mV' },
            { label: 'Charge Current', value: '300', unit: 'mA' },
          ]}
        />
      </Group>
      <Group title="GDK Charge Termination" className="h-[248px] mt-[14px] pl-[7px] pt-[10px]">
        <FieldRows
          rows={[
            { label: 'Taper Current', radio: true, on: true, value: '200', unit: 'mA' },
            { label: 'SOC', radio: true, value: '0', unit: '%', enabled: false },
            { label: 'Rem Capacity', radio: true, value: '0', unit: 'mAh', enabled: false },
            { label: 'Seconds', radio: true, value: '60', unit: 'Sec', enabled: false },
          ]}
        />
        <div className="h-[20px] flex items-center mt-[2px]">
          <Radio label="FC Bit" />
        </div>
      </Group>
      <Group title="Relax After Charge" className="h-[40px] mt-[14px] pl-[7px] pt-[10px]">
        <FieldRows rows={[{ label: 'Relax Time', value: '1', unit: 'minutes' }]} />
      </Group>
    </div>
  );
}

function DischargeConfig() {
  return (
    <div className="w-[652px] h-[435px] border border-[#dcdcdc] px-[7px] pt-[12px]">
      <div className="h-[20px] bg-[#800000] text-white text-center text-[13px] leading-[18px]">Discharge Configuration</div>
      <Group title="GDK Discharge Setup" className="h-[196px] mt-[12px] pl-[7px] pt-[10px]">
        <FieldRows
          rows={[
            { label: 'Const Current', radio: true, on: true, value: '500', unit: 'mA' },
            { label: 'Const Power', radio: true, value: '1000', unit: 'mW', enabled: false },
            { label: 'Pulsed Load', radio: true, value: '500', unit: 'mA HI', enabled: false },
            { value: '100', unit: 'mA LO', enabled: false },
            { value: '500', unit: 'ms Period', enabled: false },
            { value: '50', unit: '% Duty', enabled: false },
            { label: 'Discharge Cutoff', value: '3600', unit: 'mV' },
          ]}
        />
      </Group>
      <Group title="GDK Discharge Termination" className="h-[118px] mt-[14px] pl-[7px] pt-[10px]">
        <FieldRows
          rows={[
            { label: 'Term Voltage', radio: true, on: true, value: '3600', unit: 'mV' },
            { label: 'SOC', radio: true, value: '0', unit: '%', enabled: false },
            { label: 'Rem Capacity', radio: true, value: '0', unit: 'mAh', enabled: false },
            { label: 'Seconds', radio: true, value: '60', unit: 'Sec', enabled: false },
          ]}
        />
      </Group>
      <Group title="Relax After Discharge" className="h-[40px] mt-[14px] pl-[7px] pt-[10px]">
        <FieldRows rows={[{ label: 'Relax Time', value: '1', unit: 'minutes' }]} />
      </Group>
    </div>
  );
}

function Chevron({ up }: { up?: boolean }) {
  return (
    <svg viewBox="0 0 10 6" className="w-[9px] h-[6px]">
      <path d={up ? 'M1 5l4-3.500 4 3.500' : 'M1 1l4 3.500 4-3.500'} stroke="#606060" strokeWidth="1.8" fill="none" />
    </svg>
  );
}

function Scrollbar({ thumb }: { thumb: string }) {
  return (
    <div className="w-[16px] bg-[#f0f0f0] flex flex-col shrink-0">
      <div className="h-[17px] flex items-center justify-center shrink-0"><Chevron up /></div>
      <div className="flex-1"><div className={`bg-[#c8c8c8] ${thumb}`} /></div>
      <div className="h-[17px] flex items-center justify-center shrink-0"><Chevron /></div>
    </div>
  );
}

const statusLines = [
  'Mon Nov 20 16:02:11 EST 2017: Start Task: Relax ( Terminate when Duration = 1 )',
  'Mon Nov 20 16:03:12 EST 2017: End Task: Relax completed in 00:01:00',
  'Mon Nov 20 16:03:12 EST 2017: End Task (Unexpected): Charge - false',
  'Mon Nov 20 16:03:12 EST 2017: Start Task: Charge ( Terminate when TaperCurrent = 200 )',
  'Mon Nov 20 16:03:13 EST 2017: Complete!',
];

function StatusPanel() {
  return (
    <div className="relative mt-[11px] ml-[10px] mr-[10px] h-[105px] border border-[#dcdcdc] border-b-0 pt-[4px]">
      <svg viewBox="0 0 392 26" className="absolute left-[-11px] top-[28px] w-[392px] h-[26px]">
        <path d="M1 8h325l4-6 60-1 2 20-330 2-60 3z" fill="#ffff00" />
      </svg>
      <span className="absolute -top-[9px] left-[6px] px-[1px] leading-[16px] bg-white">Status</span>
      <div className="relative h-[98px] border border-[#a9b4c0] flex mx-0">
        <div className="flex-1 pt-[2px] pl-[3px] tracking-[-0.16px]">
          {statusLines.map((line, i) => (
            <div key={i} className="h-[15px] leading-[15px] whitespace-nowrap">{line}</div>
          ))}
        </div>
        <div className="flex my-[1px] mr-[1px] w-[15px]">
          <Scrollbar thumb="h-[30px] mt-[30px]" />
        </div>
      </div>
    </div>
  );
}

function CenterPane() {
  return (
    <div className="w-[1348px] shrink-0 ml-[5px] border-l border-r border-b border-[#a0a0a0] flex flex-col bg-white">
      <div className="h-[23px] bg-[#f0f0f0] border-b border-[#a0a0a0] flex shrink-0">
        <div className="w-[73px] h-[22px] flex items-center pl-[3px] gap-[5px] border-r border-[#c8c8c8] tracking-[-0.15px]">
          <GearIcon className="w-[14px] h-[17px]" />
          <span>Registers</span>
        </div>
        <div className="w-[101px] h-[22px] flex items-center pl-[3px] gap-[6px] border-r border-[#a0a0a0]">
          <ChipIcon className="w-[15px] h-[10px]" />
          <span>Data Memory</span>
        </div>
        <div className="w-[71px] h-[23px] bg-[#f6f6f6] flex items-center pl-[5px] gap-[8px] border-r border-[#a0a0a0]">
          <BatteryIcon className="w-[11px] h-[18px]" />
          <span>GDK</span>
          <CloseX />
        </div>
        <div className="ml-auto pr-[10px]"><PaneControls /></div>
      </div>
      <div className="h-[36px] bg-gradient-to-b from-white to-[#e4ebf5] border-b-2 border-[#c8d7e8] flex items-center pl-[7px] shrink-0">
        <span className="text-[18px] tracking-[0.5px] text-[#0a78d7]">GDK</span>
        <svg viewBox="0 0 8 4" className="w-[8px] h-[4px] ml-[6px]"><path d="M0 0h8L4 4z" fill="#1a73c8" /></svg>
      </div>
      <div className="ml-[3px] mr-[5px] mt-[3px] h-[748px] border-l border-r border-t border-[#c4d3e4] rounded-t-[3px] flex flex-col">
        <div className="h-[22px] shrink-0 bg-gradient-to-b from-[#e8eef6] to-white pl-[5px] pb-[2px] flex items-center font-bold text-[#0a6ec0] text-[12.700px]">Gauge Development Kit</div>
        <div className="ml-[6px] mr-[4px] flex-1 flex flex-col">
          <div className="h-[24px] bg-[#f0f0f0] flex pl-[1px] items-end shrink-0">
            <div className="w-[116px] h-[23px] flex items-center pl-[6px] gap-[6px] border-l border-r border-t border-[#dcdcdc]">
              <svg viewBox="0 0 16 16" className="w-[16px] h-[16px]">
                <circle cx="8" cy="8" r="7.400" fill="#efefef" stroke="#777" />
                <path d="M5 4v8M8 4v8M11 4v8" stroke="#777" />
                <circle cx="5" cy="10" r="1.300" fill="#666" />
                <circle cx="8" cy="6" r="1.300" fill="#666" />
                <circle cx="11" cy="9" r="1.300" fill="#666" />
              </svg>
              <span>Manual Control</span>
            </div>
            <div className="w-[95px] h-[25px] -mt-[2px] bg-white flex items-center pl-[9px] gap-[8px] border-r border-t border-[#dcdcdc]">
              <SyncIcon className="w-[13px] h-[16px] -mt-[3px]" />
              <span className="-mt-[2px]">Auto Cycle</span>
            </div>
            <div className="w-[103px] h-[23px] flex items-center pl-[5px] gap-[5px] border-r border-t border-[#dcdcdc]">
              <svg viewBox="0 0 16 18" className="w-[16px] h-[18px]">
                <path d="M2 1h10v15H2z" fill="#f5f7f7" stroke="#889" />
                <path d="M6 16l8-9 2 2-8 9H5z" fill="#e8b33f" stroke="#a77" strokeWidth="0.6" />
              </svg>
              <span>Script Control</span>
            </div>
          </div>
          <div className="h-[701px] bg-[#f0f0f0] pl-[2px] pr-[4px] pb-[4px] border-l border-[#a9a9a9] shrink-0">
            <div className="h-full border border-[#a9a9a9] bg-white">
              <CycleSetup />
              <div className="ml-[6px] mt-[14px] flex gap-[3px]">
                <ChargeConfig />
                <DischargeConfig />
              </div>
            </div>
          </div>
        </div>
      </div>
      <StatusPanel />
    </div>
  );
}

function CmdIcon({ green = true, className = 'w-[14px] h-[16px]' }: { green?: boolean; className?: string }) {
  return (
    <svg viewBox="0 0 14 16" className={`${className} shrink-0`}>
      <path d="M1 8l6-4-1-2 6-1-1 6-2-1.500-5 4z" fill="#4673ad" />
      {green && <path d="M13 7L7 11l1 2-6 2 1-6 2 1 5-4z" fill="#77b148" />}
    </svg>
  );
}

const commands: [string, boolean][] = [
  ['CONTROL_STATUS', true],
  ['DEVICE_TYPE', true],
  ['FW_VERSION', true],
  ['DM_CODE', true],
  ['PREV_MACWRITE', true],
  ['CHEM_ID', true],
  ['BAT_INSERT', false],
  ['BAT_REMOVE', false],
  ['SET_HIBERNATE', false],
  ['CLEAR_HIBERNATE', false],
  ['SET_CFGUPDATE', false],
  ['SET_FAST_HIBERNATE', false],
  ['SMOOTH_SYNC', false],
  ['SHUTDOWN_ENABLE', false],
  ['SHUTDOWN', false],
];

function SelectBox({ value, className }: { value: string; className: string }) {
  return (
    <div className={`h-[23px] border border-[#7a7a7a] bg-white flex items-center justify-between pl-[5px] pr-[3px] ${className}`}>
      <span>{value}</span>
      <ChevronDown size={13} className="text-[#555]" />
    </div>
  );
}

function CommandsPane() {
  return (
    <div className="flex-1 ml-[4px] border-l border-b border-[#a0a0a0] flex flex-col bg-white">
      <div className="h-[23px] bg-[#f0f0f0] border-b border-[#a0a0a0] flex shrink-0">
        <div className="w-[111px] h-[23px] bg-[#f6f6f6] flex items-center pl-[5px] gap-[6px] border-r border-[#a0a0a0]">
          <SyncIcon className="w-[13px] h-[18px]" />
          <span>Commands</span>
          <CloseX />
        </div>
        <div className="ml-auto pr-[9px]"><PaneControls /></div>
      </div>
      <div className="mx-[2px] h-[36px] bg-gradient-to-b from-white to-[#e4ebf5] border-b-2 border-[#c8d7e8] flex items-center pl-[6px] shrink-0">
        <span className="text-[18px] text-[#0a78d7]">Commands</span>
      </div>
      <div className="h-[434px] mt-[5px] flex pl-[8px] pr-[2px] shrink-0">
        <div className="w-[150px] pt-[4px] flex flex-col gap-[5px]">
          {commands.map(([name, green]) => (
            <button key={name} className="h-[24px] shrink-0 bg-[#e1e1e1] border border-[#a8a8a8] flex items-center justify-center gap-[6px]">
              <CmdIcon green={green} />
              <span className="whitespace-nowrap tracking-[-0.1px]">{name}</span>
            </button>
          ))}
        </div>
        <div className="flex ml-auto">
          <Scrollbar thumb="h-[298px]" />
        </div>
      </div>
      <div className="ml-[6px] w-[262px] h-[179px] mt-[9px] border-l border-r border-t border-[#c4d3e4] rounded-t-[3px] shrink-0">
        <div className="h-[23px] bg-gradient-to-b from-[#e8eef6] to-white flex items-center pl-[6px] pb-[2px] font-bold text-[#0a6ec0] text-[12.500px]">
          <svg viewBox="0 0 8 5" className="w-[8px] h-[5px]"><path d="M0 0h8L4 5z" fill="#0a6ec0" /></svg>
          <span className="ml-[7px]">Manual Control Panel</span>
        </div>
        <div className="pl-[10px] pt-[5px] grid grid-cols-[76px_58px_64px] gap-x-[5px]">
          <span className="h-[20px] leading-[16px]">Enter Cmd</span>
          <span className="h-[20px] leading-[16px]">Delay Ms</span>
          <span className="h-[20px] leading-[16px] whitespace-nowrap">Access Style</span>
          <div className="h-[21px] mt-px border border-[#7a7a7a] bg-white" />
          <SelectBox value="1000" className="w-[58px]" />
          <SelectBox value="1" className="w-[64px]" />
          <span className="h-[23px] mt-[6px] pt-[7px] leading-[16px]">Read Addr</span>
          <span className="h-[23px] mt-[6px] pt-[7px] leading-[16px]">Length</span>
          <button className="mt-[6px] ml-px w-[62px] h-[20px] bg-[#e1e1e1] border border-[#a8a8a8] flex items-center justify-center">
            <CmdIcon green={false} className="w-[11px] h-[13px]" />
          </button>
          <div className="h-[21px] mt-[6px] border border-[#7a7a7a] bg-white" />
          <div className="h-[21px] mt-[6px] border border-[#7a7a7a] bg-white" />
          <button className="mt-[6px] ml-px w-[62px] h-[21px] bg-[#e1e1e1] border border-[#a8a8a8] flex items-center justify-center">
            <CmdIcon className="w-[12px] h-[14px]" />
          </button>
        </div>
      </div>
      <div className="ml-[4px] w-[266px] flex-1 border-l border-r border-t border-[#c4d3e4] rounded-t-[3px]">
        <div className="h-[28px] bg-gradient-to-b from-[#e8eef6] to-white flex items-start pl-[6px] pt-[1px] pr-[6px] justify-between">
          <span className="font-bold text-[#0a6ec0] text-[12.500px]">Log Panel</span>
          <button className="w-[60px] h-[23px] mt-[2px] bg-[#e1e1e1] border border-[#a8a8a8]">Clear Log</button>
        </div>
        <Group title="Transaction Log" className="ml-[5px] mt-[11px] w-[253px] h-[198px] px-[2px] pt-[7px]">
          <div className="w-[248px] h-[189px] border-2 border-[#8a939d] bg-white overflow-hidden">
            <div className="h-[24px] flex border-b border-[#eeeeee]">
              {['Name', 'Cmd', 'Result', 'Read A...', ''].map((h, i) => (
                <div key={i} className="w-[60px] shrink-0 pl-[6px] leading-[24px] border-r border-[#e6e6e6]">{h}</div>
              ))}
            </div>
            {['CHEM_ID', '', '', '', '', '', '', ''].map((name, i) => (
              <div key={i} className="h-[19px] flex border-b border-[#ececec]">
                {(name ? [name, '0x08', '0x1202', '0x00', ''] : ['', '', '', '', '']).map((c, j) => (
                  <div key={j} className="w-[60px] shrink-0 pl-[6px] leading-[18px] border-r border-[#ececec]">{c}</div>
                ))}
              </div>
            ))}
          </div>
        </Group>
      </div>
    </div>
  );
}

export default function App() {
  return (
    <div className="w-[1918px] h-[1019px] overflow-hidden flex flex-col bg-[#f0f0f0] font-['Roboto',sans-serif] text-[12px] text-[#111]">
      <div className="h-[24px] bg-white flex items-center pl-[5px] shrink-0">
        <BqLogo className="w-[11px] h-[16px]" />
        <span className="ml-[7px] tracking-[-0.1px]">Battery Management Studio ( bqStudio ) 1.3.54.1</span>
        <div className="ml-auto flex items-center">
          <div className="w-[10px] h-px bg-black mr-[35px]" />
          <svg viewBox="0 0 10 10" className="w-[10px] h-[10px] mr-[36px]">
            <path d="M0.500 2.500h7v7h-7zM2.500 2.500v-2h7v7h-2" fill="none" stroke="#111" />
          </svg>
          <svg viewBox="0 0 11 11" className="w-[11px] h-[11px] mr-[17px]">
            <path d="M0.500 0.500l10 10M10.500 0.500l-10 10" stroke="#111" />
          </svg>
        </div>
      </div>
      <div className="h-[17px] bg-white flex items-center pl-[7px] gap-[14px] shrink-0">
        <span>File</span>
        <span>View</span>
        <span>Window</span>
        <span>Help</span>
      </div>
      <Toolbar />
      <div className="h-px flex shrink-0">
        <div className="w-[1584px] bg-[#a0a0a0]" />
        <div className="flex-1 bg-black" />
      </div>
      <div className="h-[931px] flex shrink-0">
        <DashBoard />
        <CenterPane />
        <CommandsPane />
      </div>
      <div className="flex-1 flex pl-[1489px]">
        <div className="w-[151px] bg-white flex pl-[5px] gap-[2px]">
          <div className="w-[5px] h-[4px] bg-[#ff0000]" />
          <div className="w-[4px] h-[3px] mt-px bg-[#ffb0b0]" />
        </div>
      </div>
    </div>
  );
}
